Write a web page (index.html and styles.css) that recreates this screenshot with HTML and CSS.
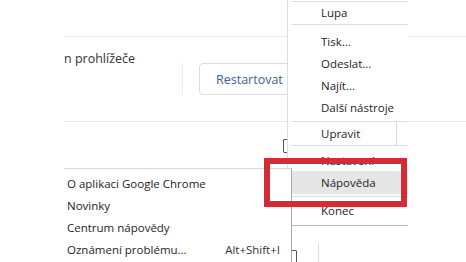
FILE: index.html
```html
<!DOCTYPE html>
<html lang="cs">
<head>
  <meta charset="UTF-8">
  <meta name="viewport" content="width=device-width, initial-scale=1.0">
  <title>Nápověda</title>
  <link rel="stylesheet" href="styles.css">
</head>
<body>
  <div class="screen">

    <!-- Settings page behind the menus -->
    <div class="settings">
      <section class="settings-row">
        <div class="row-text">n prohlížeče</div>
        <div class="row-divider"></div>
        <button class="btn">Restartovat</button>
      </section>
      <div class="icon-row">
        <span class="box-icon"></span>
      </div>
      <div class="foot-row">
        <span class="box-icon small"></span>
        <span class="foot-line"></span>
      </div>
    </div>

    <!-- Chrome main menu -->
    <div class="menu main-menu">
      <div class="menu-sep first"></div>
      <div class="menu-item">Lupa</div>
      <div class="menu-sep"></div>
      <div class="menu-group tall">
        <div class="menu-item">Tisk...</div>
        <div class="menu-item">Odeslat...</div>
        <div class="menu-item">Najít...</div>
        <div class="menu-item">Další nástroje</div>
      </div>
      <div class="menu-sep"></div>
      <div class="menu-item edit-row">
        <span class="edit-label">Upravit</span>
        <span class="edit-btn"></span>
      </div>
      <div class="menu-sep"></div>
      <div class="menu-group mid">
        <div class="menu-item short">Nastavení</div>
        <div class="menu-item active">Nápověda</div>
      </div>
      <div class="menu-sep"></div>
      <div class="menu-group end">
        <div class="menu-item">Konec</div>
      </div>
    </div>

    <!-- Help submenu -->
    <div class="menu help-menu">
      <div class="sub-item"><span>O aplikaci Google Chrome</span></div>
      <div class="sub-item"><span>Novinky</span></div>
      <div class="sub-item"><span>Centrum nápovědy</span></div>
      <div class="sub-item"><span>Oznámení problému...</span><span class="shortcut">Alt+Shift+I</span></div>
    </div>

    <!-- Red highlight around Nápověda -->
    <div class="mark"></div>
  </div>
</body>
</html>
```

FILE: styles.css
```css
html, body {
  margin: 0;
  padding: 0;
}

body {
  font-family: "Open Sans", "Noto Sans", sans-serif;
  background: #fff;
  color: #222;
}

.screen {
  position: relative;
  width: 466px;
  height: 262px;
  overflow: hidden;
}

/* settings page */
.settings {
  margin-left: 64px;
  padding-top: 36px;
}

.settings-row {
  display: flex;
  align-items: flex-start;
  height: 84px;
  border-top: 1px solid #ececec;
  border-bottom: 1px solid #e6e6e6;
}

.row-text {
  width: 118px;
  padding-top: 13px;
  font-size: 12.5px;
  line-height: 18px;
  color: #333;
  white-space: nowrap;
}

.row-divider {
  width: 1px;
  height: 32px;
  margin-top: 26px;
  background: #eeeeee;
}

.btn {
  margin: 26px 0 0 16px;
  width: 110px;
  height: 32px;
  padding: 0 0 0 16px;
  text-align: left;
  font-family: inherit;
  font-size: 12.5px;
  color: #41618f;
  background: #fff;
  border: 1px solid #dadce0;
  border-radius: 4px;
}

.icon-row {
  height: 30px;
  padding-left: 219px;
}

.box-icon {
  display: block;
  margin-top: 17px;
  width: 10px;
  height: 12px;
  border: 1.5px solid #555;
  border-radius: 1px;
}

.foot-row {
  display: flex;
  align-items: flex-start;
  padding-left: 224px;
}

.box-icon.small {
  margin-top: 81px;
  width: 7px;
  height: 11px;
}

.foot-line {
  width: 1px;
  height: 40px;
  margin: 74px 0 0 21px;
  background: #dcdcdc;
}

/* menus */
.menu {
  position: absolute;
  background: #fff;
  font-size: 11.5px;
  color: #1e1e1e;
}

.main-menu {
  left: 287px;
  top: 0;
  width: 120px;
  border-left: 1px solid #dedede;
  border-bottom: 1px solid #b8b8b8;
  z-index: 1;
}

.menu-sep {
  height: 1px;
  margin-left: 3px;
  background: #e0e0e0;
}

.menu-sep.first {
  margin-top: 1px;
}

.menu-item {
  height: 22px;
  line-height: 22px;
  padding-left: 33px;
  white-space: nowrap;
}

.menu-group.tall {
  padding: 6px 0 2px;
}

.menu-group.mid {
  padding: 4px 0 2px;
}

.menu-group.end {
  padding: 3px 0 3px;
}

.menu-item.short {
  height: 21px;
  line-height: 21px;
}

.menu-item.active {
  height: 23px;
  line-height: 23px;
  background: #e6e6e6;
}

.edit-row {
  display: flex;
  height: 23px;
  line-height: 23px;
  padding-left: 33px;
}

.edit-label {
  flex: 1;
}

.edit-btn {
  width: 11px;
  border-left: 1px solid #dadada;
}

.help-menu {
  left: 64px;
  top: 168px;
  width: 227px;
  height: 110px;
  padding-top: 4px;
  border-top: 1px solid #d8d8d8;
  border-right: 1px solid #a9a9a9;
  z-index: 2;
}

.sub-item {
  display: flex;
  justify-content: space-between;
  height: 22px;
  line-height: 22px;
  padding: 0 11px 0 3px;
  white-space: nowrap;
}

.shortcut {
  color: #333;
}

.mark {
  position: absolute;
  left: 264px;
  top: 158px;
  width: 143px;
  height: 49px;
  box-sizing: border-box;
  border: 6px solid #d42b35;
  z-index: 3;
}
```
